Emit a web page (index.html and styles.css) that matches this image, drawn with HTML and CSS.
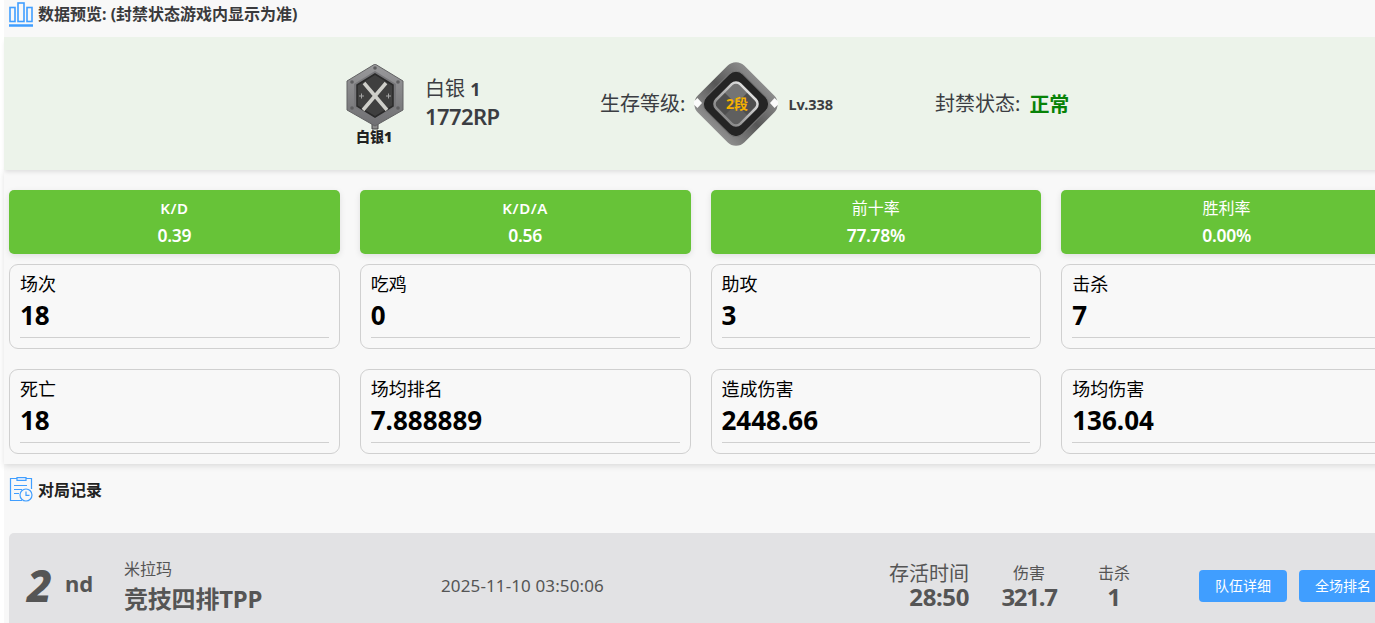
FILE: index.html
```html
<!DOCTYPE html>
<html lang="zh-CN">
<head>
<meta charset="utf-8">
<title>数据预览</title>
<link rel="stylesheet" href="styles.css">
</head>
<body>
<main class="page">
  <header class="sec-title first">
    <svg class="ico" width="24" height="26" viewBox="0 0 24 26" fill="none" stroke="#409eff" stroke-width="1.600">
      <rect x="1" y="6.500" width="5" height="14"/><rect x="9" y="2" width="6" height="18.500"/><rect x="18" y="6.500" width="5" height="14"/>
      <path d="M0 24.500h24" stroke-width="2.500"/>
    </svg>
    <span>数据预览: (封禁状态游戏内显示为准)</span>
  </header>

  <section class="banner">
    <div class="rank">
      <svg width="62" height="84" viewBox="0 0 62 84">
        <defs>
          <linearGradient id="hexg" x1="0" y1="0" x2="0" y2="1"><stop offset="0" stop-color="#9a9a9c"/><stop offset="1" stop-color="#6f6f72"/></linearGradient>
        </defs>
        <path d="M28 51h6v14h-6z" fill="#8d8d8d" stroke="#444" stroke-width="1"/>
        <path d="M31 0 59 17V46L31 62 3 46V17Z" fill="url(#hexg)" stroke="#626264" stroke-width="1"/>
        <path d="M31 7 52 20V43L31 55 10 43V20Z" fill="#77777a"/>
        <path d="M31 10 49 21V42L31 53 13 42V21Z" fill="#3f3f3f" stroke="#2a2a2a" stroke-width="1.500"/>
        <g fill="#5d5d5f"><circle cx="31" cy="4" r="1.800"/><circle cx="8" cy="18" r="1.800"/><circle cx="54" cy="18" r="1.800"/><circle cx="8" cy="44" r="1.800"/><circle cx="54" cy="44" r="1.800"/></g>
        <path d="M20 19 43 46M42 19 19 46" stroke="#cfcfca" stroke-width="3.500"/>
        <path d="M15 32h5M17.500 29.500v5M42 32h5M44.500 29.500v5" stroke="#a5a5a5" stroke-width="1"/>
        <text x="30" y="78" text-anchor="middle" class="badge-name">白银1</text>
      </svg>
      <div class="rank-info">
        <div class="rank-name">白银 <b>1</b></div>
        <div class="rank-rp">1772RP</div>
      </div>
    </div>
    <div class="level">
      <span class="label">生存等级:</span>
      <svg width="84" height="84" viewBox="0 0 84 84">
        <defs>
          <linearGradient id="dg" x1="0" y1="0" x2="0" y2="1"><stop offset="0" stop-color="#8c8c8c"/><stop offset=".5" stop-color="#565656"/><stop offset="1" stop-color="#8e8e8e"/></linearGradient>
          <linearGradient id="rg" x1="0" y1="0" x2="0" y2="1"><stop offset="0" stop-color="#dcdcdc"/><stop offset="1" stop-color="#8b8b8b"/></linearGradient>
          <clipPath id="ic"><rect x="25" y="25" width="34" height="34" rx="6" transform="rotate(45 42 42)"/></clipPath>
        </defs>
        <rect x="9" y="9" width="66" height="66" rx="12" transform="rotate(45 42 42)" fill="url(#dg)"/>
        <rect x="16" y="16" width="52" height="52" rx="10" transform="rotate(45 42 42)" fill="#242424" stroke="#777" stroke-width="1"/>
        <g clip-path="url(#ic)">
          <path d="M0 0H84V84H0Z" fill="#4f4f4f"/>
          <path d="M42 42 14 14H70Z" fill="#747474"/>
          <path d="M42 42 14 70H70Z" fill="#5f5f5f"/>
        </g>
        <rect x="25" y="25" width="34" height="34" rx="6" transform="rotate(45 42 42)" fill="none" stroke="url(#rg)" stroke-width="2.500"/>
        <path d="M-2 41 3.500 36 8 41 3.500 46Z" fill="#fbfbfb"/>
        <path d="M86 41 80.500 36 76 41 80.500 46Z" fill="#fbfbfb"/>
        <text x="43" y="47" text-anchor="middle" class="level-num">2段</text>
      </svg>
      <span class="lv">Lv.338</span>
    </div>
    <div class="ban">
      <span class="label">封禁状态:</span>
      <span class="ok">正常</span>
    </div>
  </section>

  <section class="stats">
    <div class="grid">
      <div class="tile"><div class="tile-k latin">K/D</div><div class="tile-v">0.39</div></div>
      <div class="tile"><div class="tile-k latin">K/D/A</div><div class="tile-v">0.56</div></div>
      <div class="tile"><div class="tile-k">前十率</div><div class="tile-v">77.78%</div></div>
      <div class="tile"><div class="tile-k">胜利率</div><div class="tile-v">0.00%</div></div>
    </div>
    <div class="grid cards">
      <div class="card"><div class="card-k">场次</div><div class="card-v">18</div></div>
      <div class="card"><div class="card-k">吃鸡</div><div class="card-v">0</div></div>
      <div class="card"><div class="card-k">助攻</div><div class="card-v">3</div></div>
      <div class="card"><div class="card-k">击杀</div><div class="card-v">7</div></div>
      <div class="card"><div class="card-k">死亡</div><div class="card-v">18</div></div>
      <div class="card"><div class="card-k">场均排名</div><div class="card-v">7.888889</div></div>
      <div class="card"><div class="card-k">造成伤害</div><div class="card-v">2448.66</div></div>
      <div class="card"><div class="card-k">场均伤害</div><div class="card-v">136.04</div></div>
    </div>
  </section>

  <section class="records">
    <header class="sec-title">
      <svg class="ico" width="24" height="25" viewBox="0 0 24 25" fill="none" stroke="#409eff" stroke-width="1.200">
        <path d="M13 23.500H1.500V1.500H22.500V12"/>
        <path d="M8 .500h9v3H8Z" fill="#cfe5ff"/>
        <path d="M5 8.500h13M5 12.500h8M5 16.500h5"/>
        <circle cx="17" cy="18" r="6"/><path d="M17 14.500v3.800h3.500"/>
      </svg>
      <span>对局记录</span>
    </header>
    <article class="match">
      <div class="place"><span class="place-n">2</span><span class="place-s">nd</span></div>
      <div class="mode"><div class="map">米拉玛</div><div class="mode-name">竞技四排TPP</div></div>
      <div class="time">2025-11-10 03:50:06</div>
      <div class="m-stat m-survive"><div class="m-k">存活时间</div><div class="m-v">28:50</div></div>
      <div class="m-stat m-dmg"><div class="m-k small">伤害</div><div class="m-v tight">321.7</div></div>
      <div class="m-stat m-kill"><div class="m-k small">击杀</div><div class="m-v">1</div></div>
      <div class="btns"><button class="btn">队伍详细</button><button class="btn">全场排名</button></div>
    </article>
  </section>
</main>
</body>
</html>
```

FILE: styles.css
```css
* { box-sizing: border-box; }
html, body { margin: 0; height: 623px; overflow: hidden; background: #fff; }
body {
  font-family: "Noto Sans", "Noto Sans CJK SC", sans-serif;
  color: #303133;
}
.page {
  width: 1401px;
  margin-left: 4px;
  background: #f8f8f8;
  height: 623px;
}
.sec-title {
  display: flex;
  align-items: center;
  gap: 5px;
  padding-left: 5px;
  font-size: 16px;
  font-weight: 700;
  line-height: 20px;
}
.sec-title.first { height: 37px; padding-bottom: 9px; color: #3a3a3c; }
.ico { flex: none; }

.banner {
  position: relative;
  height: 133px;
  background: #ecf3ea;
  box-shadow: 0 3px 4px -1px rgba(0,0,0,.1);
  display: flex;
  align-items: center;
  padding-left: 340px;
  color: #3b3d42;
}
.rank { display: flex; align-items: center; gap: 19px; width: 256px; }
.rank svg { margin-top: 4px; }
.badge-name { font-size: 14px; font-weight: 900; fill: #222; }
.rank-info { margin-bottom: 2px; }
.rank-name { font-size: 20px; line-height: 27px; }
.rank-name b { font-size: 18px; }
.rank-rp { font-size: 22px; font-weight: 600; line-height: 27px; letter-spacing: -.6px; }
.level { display: flex; align-items: center; width: 335px; }
.label { font-size: 20px; line-height: 28px; }
.level svg { margin: 0 10px 0 9px; }
.level-num { font-size: 14px; font-weight: 700; fill: #f5b000; }
.lv { font-size: 14.500px; font-weight: 700; }
.ban { display: flex; align-items: center; gap: 9px; }
.ok { font-size: 20px; font-weight: 700; color: #078207; }

.stats {
  height: 294px;
  padding: 20px 0 0 5px;
  background: #f8f8f8;
  box-shadow: 0 2px 6px rgba(0,0,0,.12);
}
.grid {
  display: grid;
  grid-template-columns: repeat(4, 330.750px);
  column-gap: 20px;
  row-gap: 20px;
}
.cards { margin-top: 10px; }
.tile {
  height: 64px;
  background: #67c338;
  border-radius: 5px;
  color: #fff;
  text-align: center;
  box-shadow: 0 2px 6px rgba(0,0,0,.1);
  padding-top: 7px;
}
.tile-k { font-size: 16px; font-weight: 400; line-height: 23px; }
.tile-k.latin { font-weight: 600; letter-spacing: .6px; font-size: 15px; }
.tile-v { font-size: 17.500px; font-weight: 600; line-height: 30px; letter-spacing: -.3px; }
.card {
  height: 85px;
  border: 1px solid #d0d0d0;
  border-radius: 9px;
  padding: 7px 10px 0;
  color: #000;
}
.card-k { font-size: 18px; line-height: 24px; }
.card-v {
  font-size: 26px;
  font-weight: 700;
  line-height: 38px;
  height: 42px;
  border-bottom: 1px solid #d0d0d0;
}

.records { margin-top: 9px; padding-top: 4px; }
.records .sec-title { color: #222; height: 25px; }
.match {
  margin: 31px 0 0 5px;
  height: 100px;
  background: #e2e2e4;
  border-radius: 5px 0 0 0;
  display: flex;
  align-items: flex-start;
  color: #555;
}
.place { display: flex; align-items: flex-start; width: 115px; padding: 26px 0 0 18px; }
.place-n { font-size: 44px; font-weight: 800; font-style: italic; line-height: 52px; width: 38px; }
.place-s { font-size: 22px; font-weight: 700; line-height: 30px; margin-top: 9px; }
.mode { width: 317px; padding-top: 25px; }
.map { font-size: 16px; line-height: 22px; }
.mode-name { font-size: 24px; font-weight: 700; line-height: 38px; letter-spacing: -.2px; }
.time { width: 448px; font-size: 17px; padding-top: 40px; line-height: 26px; letter-spacing: .12px; }
.m-stat { text-align: center; padding-top: 29px; }
.m-k { font-size: 20px; line-height: 23px; }
.m-k.small { font-size: 16px; }
.m-v { font-size: 24px; font-weight: 700; line-height: 24px; letter-spacing: -.4px; }
.m-v.tight { letter-spacing: -1.300px; }
.m-survive { width: 80px; text-align: right; }
.m-dmg { width: 60px; margin-left: 30px; }
.m-kill { width: 60px; margin-left: 25px; }
.btns { display: flex; gap: 12px; margin-left: 55px; padding-top: 37px; }
.btn {
  width: 88px;
  height: 32px;
  border: 0;
  border-radius: 4px;
  background: #409eff;
  color: #fff;
  font: 14px "Noto Sans CJK SC", sans-serif;
  padding: 0 0 2px;
}
```
